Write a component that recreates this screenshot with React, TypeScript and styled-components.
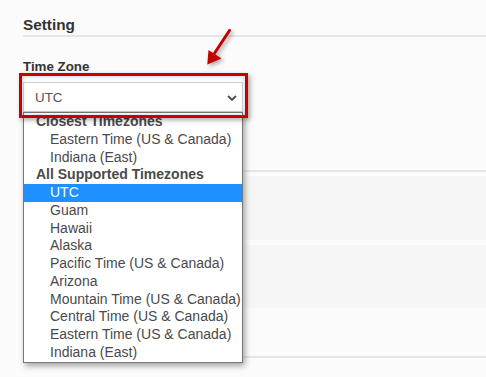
import React from "react";
import styled, { createGlobalStyle } from "styled-components";

const GlobalStyle = createGlobalStyle`
  html, body {
    margin: 0;
    padding: 0;
    background: #fbfbfb;
    font-family: "Liberation Sans", Arial, sans-serif;
  }
  * { box-sizing: border-box; }
`;

const Page = styled.div`
  position: relative;
  width: 486px;
  height: 377px;
  padding: 16px 0 0 23px;
  overflow: hidden;
`;

const Section = styled.section`
  padding-bottom: 58px;
  border-bottom: 2px solid #e6e6e6;
`;

const Heading = styled.h2`
  margin: 0;
  font-size: 15.3px;
  line-height: 17px;
  font-weight: bold;
  color: #333;
  padding-bottom: 2px;
  border-bottom: 2px solid #e6e6e6;
`;

const Label = styled.div`
  margin-top: 22px;
  font-size: 13.33px;
  line-height: 16px;
  font-weight: bold;
  color: #333;
`;

const SelectWrap = styled.div`
  position: relative;
  margin-top: 7px;
  width: 220px;
`;

const SelectBox = styled.div`
  height: 30px;
  background: #fff;
  border: 1px solid #cfcfcf;
  display: flex;
  align-items: center;
  justify-content: space-between;
  padding: 0 5px 0 11px;
  font-size: 13.33px;
  color: #555;
`;

const Chevron = styled.svg`
  width: 10px;
  height: 6px;
  margin-top: 1px;
`;

const List = styled.ul`
  position: absolute;
  z-index: 2;
  left: 0;
  top: 30px;
  width: 220px;
  margin: 0;
  padding: 0;
  list-style: none;
  background: #fff;
  border: 1px solid #777;
  box-shadow: 2px 3px 6px rgba(0, 0, 0, 0.35);
`;

const Item = styled.li<{ $group?: boolean; $selected?: boolean }>`
  height: 17.75px;
  line-height: 17.75px;
  font-size: 14px;
  white-space: nowrap;
  padding-left: ${(p) => (p.$group ? "12px" : "26px")};
  font-weight: ${(p) => (p.$group ? "bold" : "normal")};
  color: ${(p) => (p.$selected ? "#fff" : "#4a4a4a")};
  background: ${(p) => (p.$selected ? "#1e90ff" : "transparent")};
`;

const Frame = styled.div`
  position: absolute;
  z-index: 3;
  left: -4px;
  top: -9px;
  width: 229px;
  height: 45px;
  border: 3px solid #c40000;
  box-shadow: 2px 2px 5px rgba(0, 0, 0, 0.35), inset 0 0 4px rgba(0, 0, 0, 0.2);
  pointer-events: none;
`;

const Arrow = styled.svg`
  position: absolute;
  z-index: 3;
  left: 200px;
  top: 26px;
  width: 45px;
  height: 45px;
  overflow: visible;
  filter: drop-shadow(2px 2px 2px rgba(0, 0, 0, 0.35));
`;

const Band = styled.div<{ $h: number; $gap: number }>`
  margin-top: ${(p) => p.$gap}px;
  height: ${(p) => p.$h}px;
  background: #f6f6f6;
`;

const BottomRule = styled.div`
  margin-top: 48px;
  border-top: 2px solid #e6e6e6;
`;

type Opt = { label: string; group?: boolean; selected?: boolean };

const options: Opt[] = [
  { label: "Closest Timezones", group: true },
  { label: "Eastern Time (US & Canada)" },
  { label: "Indiana (East)" },
  { label: "All Supported Timezones", group: true },
  { label: "UTC", selected: true },
  { label: "Guam" },
  { label: "Hawaii" },
  { label: "Alaska" },
  { label: "Pacific Time (US & Canada)" },
  { label: "Arizona" },
  { label: "Mountain Time (US & Canada)" },
  { label: "Central Time (US & Canada)" },
  { label: "Eastern Time (US & Canada)" },
  { label: "Indiana (East)" },
];

export default function App() {
  return (
    <>
      <GlobalStyle />
      <Page>
        <Section>
          <Heading>Setting</Heading>
          <Label>Time Zone</Label>
          <SelectWrap>
            <SelectBox>
              <span>UTC</span>
              <Chevron viewBox="0 0 10 6">
                <path d="M1 1 L5 4.8 L9 1" fill="none" stroke="#555" strokeWidth="2" />
              </Chevron>
            </SelectBox>
            <List>
              {options.map((o, i) => (
                <Item key={i} $group={o.group} $selected={o.selected}>
                  {o.label}
                </Item>
              ))}
            </List>
            <Frame />
          </SelectWrap>
        </Section>
        <Band $gap={4} $h={64} />
        <Band $gap={5} $h={63} />
        <BottomRule />
        <Arrow viewBox="200 26 45 45">
          <line x1="229.5" y1="30.5" x2="214" y2="54" stroke="#c40000" strokeWidth="3" strokeLinecap="round" />
          <polygon points="207.3,64.5 208.5,50 221.5,58.5" fill="#c40000" />
        </Arrow>
      </Page>
    </>
  );
}
